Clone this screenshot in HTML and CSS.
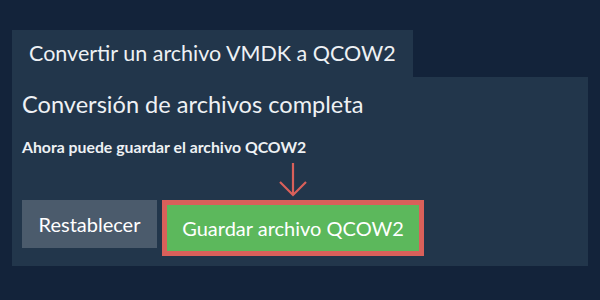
FILE: index.html
```html
<!DOCTYPE html>
<html lang="es">
  <head>
    <meta charset="UTF-8" />
    <meta name="viewport" content="width=device-width, initial-scale=1.0" />
    <title>Convertir un archivo VMDK a QCOW2</title>
    <link rel="stylesheet" href="styles.css">
  </head>
  <body>
    <div class="converter">
      <div class="tab">Convertir un archivo VMDK a QCOW2</div>

      <div class="panel">
        <h2 class="panel-title">Conversión de archivos completa</h2>
        <p class="panel-note">Ahora puede guardar el archivo QCOW2</p>

        <div class="actions">
          <button class="btn btn-reset">Restablecer</button>
          <div class="save-wrap">
            <!-- flecha que apunta al botón -->
            <svg class="save-arrow" width="30" height="36" viewBox="0 0 30 36">
              <path d="M15 1 V33 M2 20 L15 33 L28 20" fill="none" stroke="#d9605a" stroke-width="2.2" />
            </svg>
            <button class="btn btn-save">Guardar archivo QCOW2</button>
          </div>
        </div>
      </div>
    </div>
  </body>
</html>
```

FILE: styles.css
```css
* {
  box-sizing: border-box;
  font-family: "Lato", "Liberation Sans", sans-serif;
}

html,
body {
  margin: 0;
  padding: 0;
  background: #13233a;
  height: 100vh;
  overflow: hidden;
}

.converter {
  padding: 30px 12px 0;
  color: #eef1f4;
}

.tab {
  display: inline-block;
  background: #22364b;
  height: 47px;
  padding: 0 17px 0 17px;
  font-size: 21.5px;
  line-height: 47px;
}

.panel {
  background: #22364b;
  padding: 0 10px 10px;
}

.panel-title {
  margin: 0;
  padding-top: 12px;
  font-size: 23.6px;
  font-weight: 400;
  line-height: 30px;
}

.panel-note {
  margin: 18px 0 0;
  font-size: 15.8px;
  font-weight: 700;
  line-height: 20px;
}

.actions {
  display: flex;
  align-items: flex-start;
  gap: 5px;
  margin-top: 43px;
}

.btn {
  border: none;
  color: #fff;
  font-size: 20px;
  cursor: pointer;
}

.btn-reset {
  width: 135px;
  height: 48px;
  background: #4b5b6c;
}

.save-wrap {
  position: relative;
  border: 5px solid #d9605a;
}

.save-arrow {
  position: absolute;
  left: 50%;
  top: -43px;
  transform: translateX(-50%);
}

.btn-save {
  display: block;
  width: 252px;
  height: 46px;
  background: #5cb85c;
}
```
